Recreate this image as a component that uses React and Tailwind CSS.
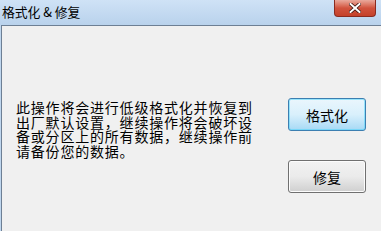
const lines = [
    "此操作将会进行低级格式化并恢复到",
    "出厂默认设置，继续操作将会破坏设",
    "备或分区上的所有数据，继续操作前",
    "请备份您的数据。",
];

const App = () => {
    return (
        <div className="w-[381px] h-[231px] overflow-hidden flex flex-col bg-[#bfd6ee] font-['Noto_Sans_CJK_SC','Liberation_Sans',sans-serif]">
            {/* title bar */}
            <div className="h-[25px] flex items-start justify-between bg-gradient-to-b from-[#cfe2f6] to-[#b9d2ec] shrink-0">
                <div className="pl-[2px] pt-[3px] text-[12.8px] leading-[18px] text-black">
                    格式化 &amp; 修复
                </div>
                <div className="mr-[5px] w-[42px] h-[17px] rounded-b-[4px] border border-t-0 border-[#8a2b20] bg-gradient-to-b from-[#e9a99c] via-[#d1533e] to-[#c4412a] flex items-center justify-center">
                    <svg width="12" height="10" viewBox="0 0 12 10">
                        <path d="M1.5 1 L10.5 9 M10.5 1 L1.5 9" stroke="#3d1510" strokeWidth="3.6" strokeLinecap="square" />
                        <path d="M1.5 1 L10.5 9 M10.5 1 L1.5 9" stroke="#ffffff" strokeWidth="2" strokeLinecap="square" />
                    </svg>
                </div>
            </div>

            {/* client area */}
            <div className="flex-1 ml-[1px] border-l border-t border-[#6d7f94] bg-[#f0f0f0] flex pt-[74px] pl-[14px] pr-[15px]">
                <div className="flex-1 text-[14px] tracking-[0.8px] text-black">
                    {lines.map((l) => (
                        <div key={l} className="h-[14.5px] leading-[14.5px] whitespace-nowrap">{l}</div>
                    ))}
                </div>

                <div className="flex flex-col gap-[29px] -mt-[2px]">
                    <button
                        type="button"
                        className="w-[78px] h-[33px] rounded-[3px] border border-[#3c7fb1] bg-gradient-to-b from-[#eaf6fd] via-[#d9f0fc] to-[#a7d9f5] shadow-[inset_0_0_0_1px_#48d3fb80] text-[14px] leading-none text-black"
                    >
                        格式化
                    </button>
                    <button
                        type="button"
                        className="w-[78px] h-[33px] rounded-[3px] border border-[#707070] bg-gradient-to-b from-[#f2f2f2] via-[#ebebeb] to-[#cfcfcf] shadow-[inset_0_0_0_1px_#fcfcfc] text-[14px] leading-none text-black"
                    >
                        修复
                    </button>
                </div>
            </div>
        </div>
    );
};

export default App;
